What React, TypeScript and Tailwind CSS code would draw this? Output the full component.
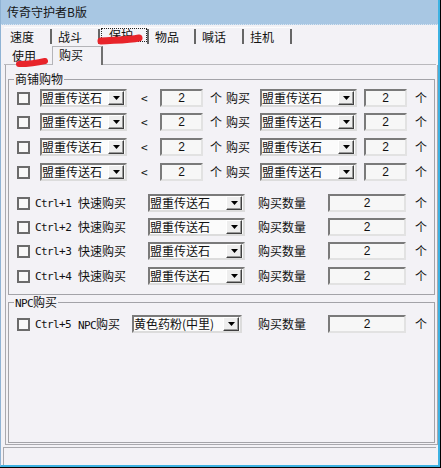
import React from "react";

const cjk = "font-['Noto_Sans_CJK_SC',sans-serif]";
const mono = "font-['DejaVu_Sans_Mono',monospace] text-[11px] tracking-[-0.6px]";

function Check() {
  return <div className="w-[13px] h-[13px] flex-none border-2 border-[#6b6b6b] bg-[#f8f8f8]" />;
}

function Arrow() {
  return (
    <div className="w-[16px] h-[14px] flex-none flex items-center justify-center bg-[#eeeeee] border border-t-white border-l-white border-r-[#404040] border-b-[#404040] shadow-[inset_-1px_-1px_0_#9a9a9a]">
      <svg width="7" height="4" viewBox="0 0 7 4">
        <path d="M0 0h7L3.5 4z" fill="#000" />
      </svg>
    </div>
  );
}

function Combo({ w, text, ml }: { w: string; text: string; ml: string }) {
  return (
    <div
      className={`${w} ${ml} h-[18px] flex-none flex items-center justify-between border-2 border-t-[#7a7a7a] border-l-[#7a7a7a] border-r-[#dcdcdc] border-b-[#dcdcdc] bg-[#fbfbfb] pr-[1px]`}
    >
      <span className="leading-none whitespace-nowrap">{text}</span>
      <Arrow />
    </div>
  );
}

function Num({ w, ml }: { w: string; ml: string }) {
  return (
    <div
      className={`${w} ${ml} h-[18px] flex-none flex items-center justify-center border-2 border-t-[#7a7a7a] border-l-[#7a7a7a] border-r-[#e2e2e2] border-b-[#e2e2e2] bg-[#f7f7f7] font-['Liberation_Sans',sans-serif] text-[12px] leading-none`}
    >
      2
    </div>
  );
}

function ShopRow({ mt }: { mt: string }) {
  return (
    <div className={`${mt} h-[18px] flex items-center pl-[8px]`}>
      <Check />
      <Combo w="w-[87px]" ml="ml-[10px]" text="盟重传送石" />
      <span className="ml-[14px] w-[19px] flex-none leading-none">&lt;</span>
      <Num w="w-[43px]" ml="ml-0" />
      <span className="ml-[7px] w-[12px] flex-none leading-none">个</span>
      <span className="ml-[4px] w-[24px] flex-none leading-none whitespace-nowrap">购买</span>
      <Combo w="w-[97px]" ml="ml-[10px]" text="盟重传送石" />
      <Num w="w-[43px]" ml="ml-[7px]" />
      <span className="ml-[8px] leading-none">个</span>
    </div>
  );
}

function CtrlRow({ mt, n }: { mt: string; n: number }) {
  return (
    <div className={`${mt} h-[18px] flex items-center pl-[8px]`}>
      <Check />
      <span className={`${mono} ml-[5px] w-[36px] flex-none leading-none whitespace-nowrap`}>Ctrl+{n}</span>
      <span className="ml-[7px] w-[48px] flex-none leading-none whitespace-nowrap">快速购买</span>
      <Combo w="w-[97px]" ml="ml-[22px]" text="盟重传送石" />
      <span className="ml-[13px] w-[48px] flex-none leading-none whitespace-nowrap">购买数量</span>
      <Num w="w-[78px]" ml="ml-[22px]" />
      <span className="ml-[9px] leading-none">个</span>
    </div>
  );
}

function Tab({ w, label, sel }: { w: string; label: string; sel?: boolean }) {
  return (
    <div className={`${w} h-[18px] flex-none flex items-center justify-between border-t border-t-[#fdfdfd]`}>
      {sel ? (
        <span className="ml-[1px] h-[14px] w-[46px] flex items-center pl-[7px] border border-dotted border-[#222] leading-none self-start">
          {label}
        </span>
      ) : (
        <span className="pl-[6px] leading-none">{label}</span>
      )}
      <div className="w-[2px] h-[15px] bg-[#666666]" />
    </div>
  );
}

export default function App() {
  return (
    <div className={`w-[441px] h-[468px] bg-black pr-[1px] pb-[1px] overflow-hidden ${cjk} text-[12px] text-[#111]`}>
      <div className="relative w-full h-full bg-[#f3f2f6] border-r-2 border-b-2 border-l border-[#3db2e2] border-l-[#8fb3d4] flex flex-col">
        {/* title bar */}
        <div className="h-[25px] flex-none bg-[#a8c7e3] flex items-center pl-[6px] border-b border-dotted border-[#d8e6f2]">
          <span className="leading-none text-[12px] text-[#151515]">传奇守护者B版</span>
        </div>

        {/* tab row 1 */}
        <div className="mt-[2px] h-[18px] flex pl-[3px]">
          <Tab w="w-[48px]" label="速度" />
          <Tab w="w-[48px]" label="战斗" />
          <Tab w="w-[49px]" label="保护" sel />
          <Tab w="w-[47px]" label="物品" />
          <Tab w="w-[48px]" label="喊话" />
          <Tab w="w-[48px]" label="挂机" />
        </div>

        {/* tab row 2 */}
        <div className="h-[20px] flex items-end pl-[3px] pr-[2px]">
          <div className="w-[48px] h-[18px] flex items-center pl-[8px] border-b border-[#b9b9bd] leading-none">使用</div>
          <div className="w-[51px] h-[19px] flex items-start pt-[2px] pl-[6px] border-t border-l border-[#b4b4b8] border-r-2 border-r-[#707070] leading-none">
            购买
          </div>
          <div className="flex-1 h-[1px] bg-[#b9b9bd]" />
        </div>

        {/* panel */}
        <div className="ml-[4px] w-[433px] h-[380px] flex-none border-l border-r border-b border-[#a9a9ae] flex flex-col">
          <fieldset className="ml-[2px] mt-[7px] w-[427px] border border-[#a3a3a8] pb-[9px]">
            <legend className="ml-[5px] px-[1px] leading-[14px] h-[14px]">商铺购物</legend>
            <ShopRow mt="mt-[3px]" />
            <ShopRow mt="mt-[6px]" />
            <ShopRow mt="mt-[7px]" />
            <ShopRow mt="mt-[7px]" />
            <CtrlRow mt="mt-[13px]" n={1} />
            <CtrlRow mt="mt-[6px]" n={2} />
            <CtrlRow mt="mt-[6px]" n={3} />
            <CtrlRow mt="mt-[7px]" n={4} />
          </fieldset>
          <fieldset className="ml-[2px] w-[427px] h-[148px] border border-[#a3a3a8]">
            <legend className="ml-[5px] px-[1px] leading-[14px] h-[14px] whitespace-nowrap">
              <span className={`${mono}`}>NPC</span>购买
            </legend>
            <div className="mt-[6px] h-[18px] flex items-center pl-[8px]">
              <Check />
              <span className={`${mono} ml-[5px] w-[36px] flex-none leading-none whitespace-nowrap`}>Ctrl+5</span>
              <span className="ml-[7px] w-[42px] flex-none leading-none whitespace-nowrap">
                <span className={`${mono}`}>NPC</span>购买
              </span>
              <Combo w="w-[110px]" ml="ml-[12px]" text="黄色药粉(中里)" />
              <span className="ml-[16px] w-[48px] flex-none leading-none whitespace-nowrap">购买数量</span>
              <Num w="w-[78px]" ml="ml-[22px]" />
              <span className="ml-[9px] leading-none">个</span>
            </div>
          </fieldset>
        </div>

        {/* bottom strip */}
        <div className="mt-[2px] ml-[2px] mr-[2px] flex-1 border-t border-l border-[#a9a9ae]" />

        {/* red annotation marks */}
        <svg className="absolute left-0 top-0 pointer-events-none" width="441" height="468">
          <path d="M100 41 C 115 40, 128 40, 138 38" stroke="#e8242a" strokeWidth="7" strokeLinecap="round" fill="none" />
          <path d="M18 64 C 28 64, 36 63, 44 61" stroke="#e8242a" strokeWidth="6" strokeLinecap="round" fill="none" />
        </svg>
      </div>
    </div>
  );
}
